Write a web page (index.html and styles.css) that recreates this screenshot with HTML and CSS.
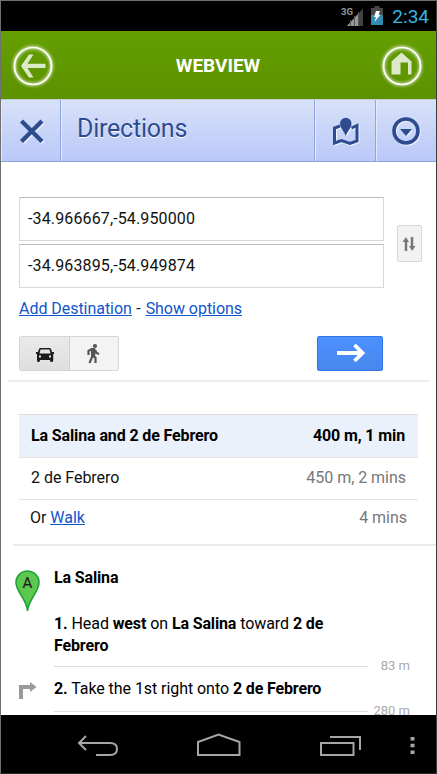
FILE: index.html
```html
<!DOCTYPE html>
<html lang="en">
<head>
<meta charset="utf-8">
<title>Directions</title>
<link rel="stylesheet" href="styles.css">
</head>
<body>
<div class="phone">
  <div class="status">
    <svg class="signal" width="23" height="22" viewBox="0 0 23 22"><path d="M6 20L22 2.500V20Z" fill="#424242"/><path d="M6 20L17.500 7.500V20Z" fill="#999"/><path d="M9.500 14V20M13.500 10V20M17.500 6V20" stroke="#555" stroke-width="1"/><text x="0" y="9" class="network">3G</text></svg>
    <svg class="battery" width="12" height="19" viewBox="0 0 12 19"><path d="M3.500 0H8.500V2H12V9H0V2H3.500Z" fill="#484848"/><path d="M0 9H12V19H0Z" fill="#328bb2"/><path d="M5 5H9L7.500 8.500H9.500L3.500 16L5 11H3Z" fill="#fff"/></svg>
    <span class="clock">2:34</span>
  </div>
  <header class="appbar">
    <svg class="round" width="48" height="48" viewBox="0 0 48 48"><circle class="glow" cx="24" cy="24" r="18.500"/><circle cx="24" cy="24" r="18.500" fill="none" stroke="#fff" stroke-width="1.700"/><path d="M12 24L20 12.500H24.500L18.500 21.800H36.500V26H18.500L24.500 35.500H20Z" fill="#dce9c8"/></svg>
    <h1>WEBVIEW</h1>
    <svg class="round" width="48" height="48" viewBox="0 0 48 48"><circle class="glow" cx="24" cy="24" r="18.500"/><circle cx="24" cy="24" r="18.500" fill="none" stroke="#fff" stroke-width="1.700"/><path d="M13.500 32.500V19.500L23.500 10.500L33.500 19.500V32.500H30V20.500H22.500V32.500Z" fill="#dce9c8"/></svg>
  </header>
  <nav class="toolbar">
    <div class="tool close"><svg width="26" height="26" viewBox="0 0 26 26"><path d="M2.500 3L23 23.500M23 3L2.500 23.500" fill="none" stroke="#2d4b8e" stroke-width="4.400"/></svg></div>
    <div class="heading">Directions</div>
    <div class="tool map"><svg width="28" height="30" viewBox="0 0 28 30"><path d="M8 10L2.500 12V27L9.500 24.500L18 27.500L25 25V9.500L19.500 12" fill="none" stroke="#2d4b8e" stroke-width="3"/><path d="M13.800 20C12 15 8 12 8 7.500A5.800 5.700 0 0 1 19.600 7.500C19.600 12 15.500 15 13.800 20Z" fill="#2d4b8e"/></svg></div>
    <div class="tool"><svg width="28" height="28" viewBox="0 0 28 28"><circle cx="14" cy="14" r="12" fill="none" stroke="#2d4b8e" stroke-width="3.600"/><path d="M8 12H20L14 19Z" fill="#2d4b8e"/></svg></div>
  </nav>
  <main>
    <form>
      <div class="places">
        <div class="fields"><div class="field">-34.966667,-54.950000</div><div class="field">-34.963895,-54.949874</div></div>
        <div class="swap"><svg width="14" height="16" viewBox="0 0 14 16"><path d="M4 15V5M10 1V11" stroke="#777" stroke-width="2.500"/><path d="M.5 6L4 1L7 6ZM7 10H13.500L10.200 15Z" fill="#777"/></svg></div>
      </div>
      <div class="options"><a>Add Destination</a> <span class="dash">-</span> <a>Show options</a></div>
      <div class="actions">
        <div class="modes">
          <div class="mode active"><svg width="18" height="16" viewBox="0 0 18 16"><path fill-rule="evenodd" d="M4.500 1H13.500Q14.500 1 15 2L16 5H18V7H17.200V13.500Q17.200 15 15.500 15Q14 15 14 13.500V13H4V13.500Q4 15 2.500 15Q1 15 1 13.500V7H0V5H2L3 2Q3.500 1 4.500 1ZM4.500 2.500L3.500 6.500H14.500L13.500 2.500ZM3 8.500V10.500H5V8.500ZM13 8.500V10.500H15V8.500Z" fill="#1c1c1c"/></svg></div>
          <div class="mode"><svg width="16" height="22" viewBox="0 0 16 22"><circle cx="10" cy="3" r="2.100" fill="#555"/><path d="M7 6L3.500 8V12M8.500 6L7.500 13L4.500 20M8 12L10.500 15V20M10 7L11.500 10L14 11" fill="none" stroke="#555" stroke-width="2.200"/><path d="M6 5H10L11 9L9.500 14H6Z" fill="#555"/></svg></div>
        </div>
        <div class="go"><svg width="30" height="20" viewBox="0 0 30 20"><path d="M1 9H26M18.500 1L26.500 9L18.500 17" fill="none" stroke="#fff" stroke-width="3.800"/></svg></div>
      </div>
    </form>
    <section class="routes">
      <div class="route chosen"><span>La Salina and 2 de Febrero</span><span>400 m, 1 min</span></div>
      <div class="route"><span>2 de Febrero</span><span class="muted">450 m, 2 mins</span></div>
      <div class="route walk"><span>Or <a>Walk</a></span><span class="muted">4 mins</span></div>
    </section>
    <section class="steps">
      <div class="row start"><svg width="26" height="42" viewBox="0 0 26 42"><path d="M12.500 41C12 29 1 22 1 12.500A11.500 11.500 0 0 1 24 12.500C24 22 13.500 29 12.500 41Z" fill="#5cc84d" stroke="#20a23b" stroke-width="1.600"/><text x="12.500" y="18" text-anchor="middle" class="letter">A</text></svg><b>La Salina</b></div>
      <div class="row first"><p><b>1.</b> Head <b>west</b> on <b>La Salina</b> toward <b>2 de Febrero</b></p></div>
      <div class="distance"><i></i><span>83 m</span></div>
      <div class="row second"><svg width="18" height="18" viewBox="0 0 18 18"><path d="M2 17V5H12" fill="none" stroke="#999" stroke-width="4"/><path d="M11 0L17.500 5L11 10Z" fill="#999"/></svg><p><b>2.</b> Take the 1st right onto <b>2 de Febrero</b></p></div>
      <div class="distance last"><i></i><span>280 m</span></div>
    </section>
  </main>
  <footer>
    <svg width="435" height="58" viewBox="0 0 435 58" fill="none" stroke="#a6a6a6" stroke-width="2"><path d="M85 21L78 28L85 35M78.500 28H109Q116 28 116 34Q116 40 109 40H95"/><path d="M197 40V27L217.500 19.500L238.500 27V40Z"/><path d="M320 28H352.500V40H320ZM329 22H359V35"/><path d="M411.500 22V39" stroke-width="4" stroke-dasharray="3.500 3.300"/></svg>
  </footer>
</div>
</body>
</html>
```
FILE: styles.css
```css
* { box-sizing: border-box; }
body { margin: 0; font: 16px/22px Roboto, sans-serif; color: #111; background: #fff; }
svg { display: block; flex: none; }
.phone { width: 437px; height: 774px; overflow: hidden; display: flex; flex-direction: column; border: 1px solid #707070; border-right-color: #3a3a3a; border-bottom-color: #292929; }
.status { height: 30px; flex: none; background: #000; display: flex; justify-content: flex-end; padding-right: 7px; }
.signal { margin-top: 5px; }
.network { font: bold 9.5px Roboto, sans-serif; fill: #999; }
.battery { margin: 5px 9px 0 7px; }
.clock { color: #33b5e5; font-size: 19px; line-height: 31px; }
.appbar { height: 68px; flex: none; padding: 0 10px 0 8px; display: flex; align-items: center; justify-content: space-between; background: linear-gradient(#649f00, #5c9100); }
.appbar h1 { margin: 2px 0 0 1px; color: #fff; font-size: 19px; line-height: 24px; }
.round { margin-top: 1px; }
.glow { fill: none; stroke: #fff; stroke-width: 3.500px; filter: blur(1.500px); opacity: .65; }
.toolbar { height: 63px; flex: none; display: flex; border-top: 1px dashed #c3cfb9; border-bottom: 1px solid #8ca2dc; background: linear-gradient(#d8e1f9, #b9c9f8); }
.tool { width: 61px; flex: none; display: flex; align-items: center; justify-content: center; border-left: 1px solid #90a5dd; box-shadow: inset 1px 0 #e4eafc; }
.tool svg { filter: drop-shadow(1px 1px 0 #f0f4ff); }
.map svg { margin-left: 1px; }
.close { width: 59px; border-left: 0; padding-left: 2px; }
.heading { flex: 1; border-left: 1px solid #90a5dd; box-shadow: inset 1px 0 #e4eafc; color: #2d4b8e; font-size: 25px; letter-spacing: -.22px; line-height: 57px; padding-left: 16px; text-shadow: 0 1px #fff; }
main { flex: 1; min-height: 0; overflow: hidden; background: #fff; }
form { height: 220px; margin: 0 7px; padding: 35px 7px 0 11px; border-bottom: 2px solid #eee; }
.places { display: flex; align-items: center; justify-content: space-between; }
.fields { width: 365px; display: grid; gap: 3px; }
.field { height: 44px; border: 1px solid #d8d8d8; border-top-color: #bbb; padding: 10px 8px; letter-spacing: .13px; }
.swap { width: 25px; height: 37px; margin-top: 2px; border: 1px solid #d8d8d8; border-radius: 2px; background: #f2f2f2; display: grid; place-items: center; padding-right: 1px; }
.options { margin-top: 10px; letter-spacing: -.04px; }
.dash { margin: 0 1px 0 .5px; }
a { color: #1155cc; text-decoration: underline; }
.actions { margin-top: 16px; width: 364px; display: flex; justify-content: space-between; }
.modes { display: flex; width: 100px; height: 35px; border: 1px solid #d6d6d6; border-radius: 2px; }
.mode { flex: 1; display: grid; place-items: center; background: #f3f3f3; padding-right: 1px; }
.active { background: linear-gradient(#eaeaea, #dedede); border-right: 1px solid #d0d0d0; padding: 3px 0 0 1px; }
.go { width: 66px; height: 35px; border: 1px solid #3079ed; border-radius: 2px; background: linear-gradient(#4d90fe, #4787ed); display: grid; place-items: center; padding-left: 1px; }
.routes { margin-left: 12px; padding: 32px 18px 0 6px; height: 164px; border-bottom: 2px solid #eaeaea; }
.route { height: 42px; display: flex; justify-content: space-between; padding: 9px 12px; border-bottom: 1px solid #e3e3e3; letter-spacing: -.03px; }
.chosen { height: 44px; font-weight: bold; letter-spacing: -.12px; color: #000; background: #eaf1fb; border-top: 1px solid #ddd; padding: 10px 13px 9px 12px; }
.walk { border: 0; padding: 7px 11px; }
.muted { color: #777; }
.steps { color: #000; }
.steps b { letter-spacing: -.14px; }
.row { display: flex; padding-left: 53px; }
.start { height: 67px; padding: 24px 0 0 14px; }
.start b { margin: -3px 0 0 13px; }
.letter { font: 15px Roboto, sans-serif; fill: #222; stroke: #222; stroke-width: .2px; }
p { margin: 0; letter-spacing: -.06px; }
.first p { width: 290px; }
.distance { display: flex; align-items: center; height: 20px; margin: -1px 0 0 53px; color: #aaa; font-size: 13px; line-height: 18px; width: 356px; justify-content: space-between; }
.distance i { width: 314px; height: 1px; background: #ddd; }
.second { padding-left: 18px; margin-top: 2px; }
.second svg { margin: 4px 17px 0 0; }
.last { margin-top: 1px; }
footer { height: 58px; flex: none; background: #000; }
```
